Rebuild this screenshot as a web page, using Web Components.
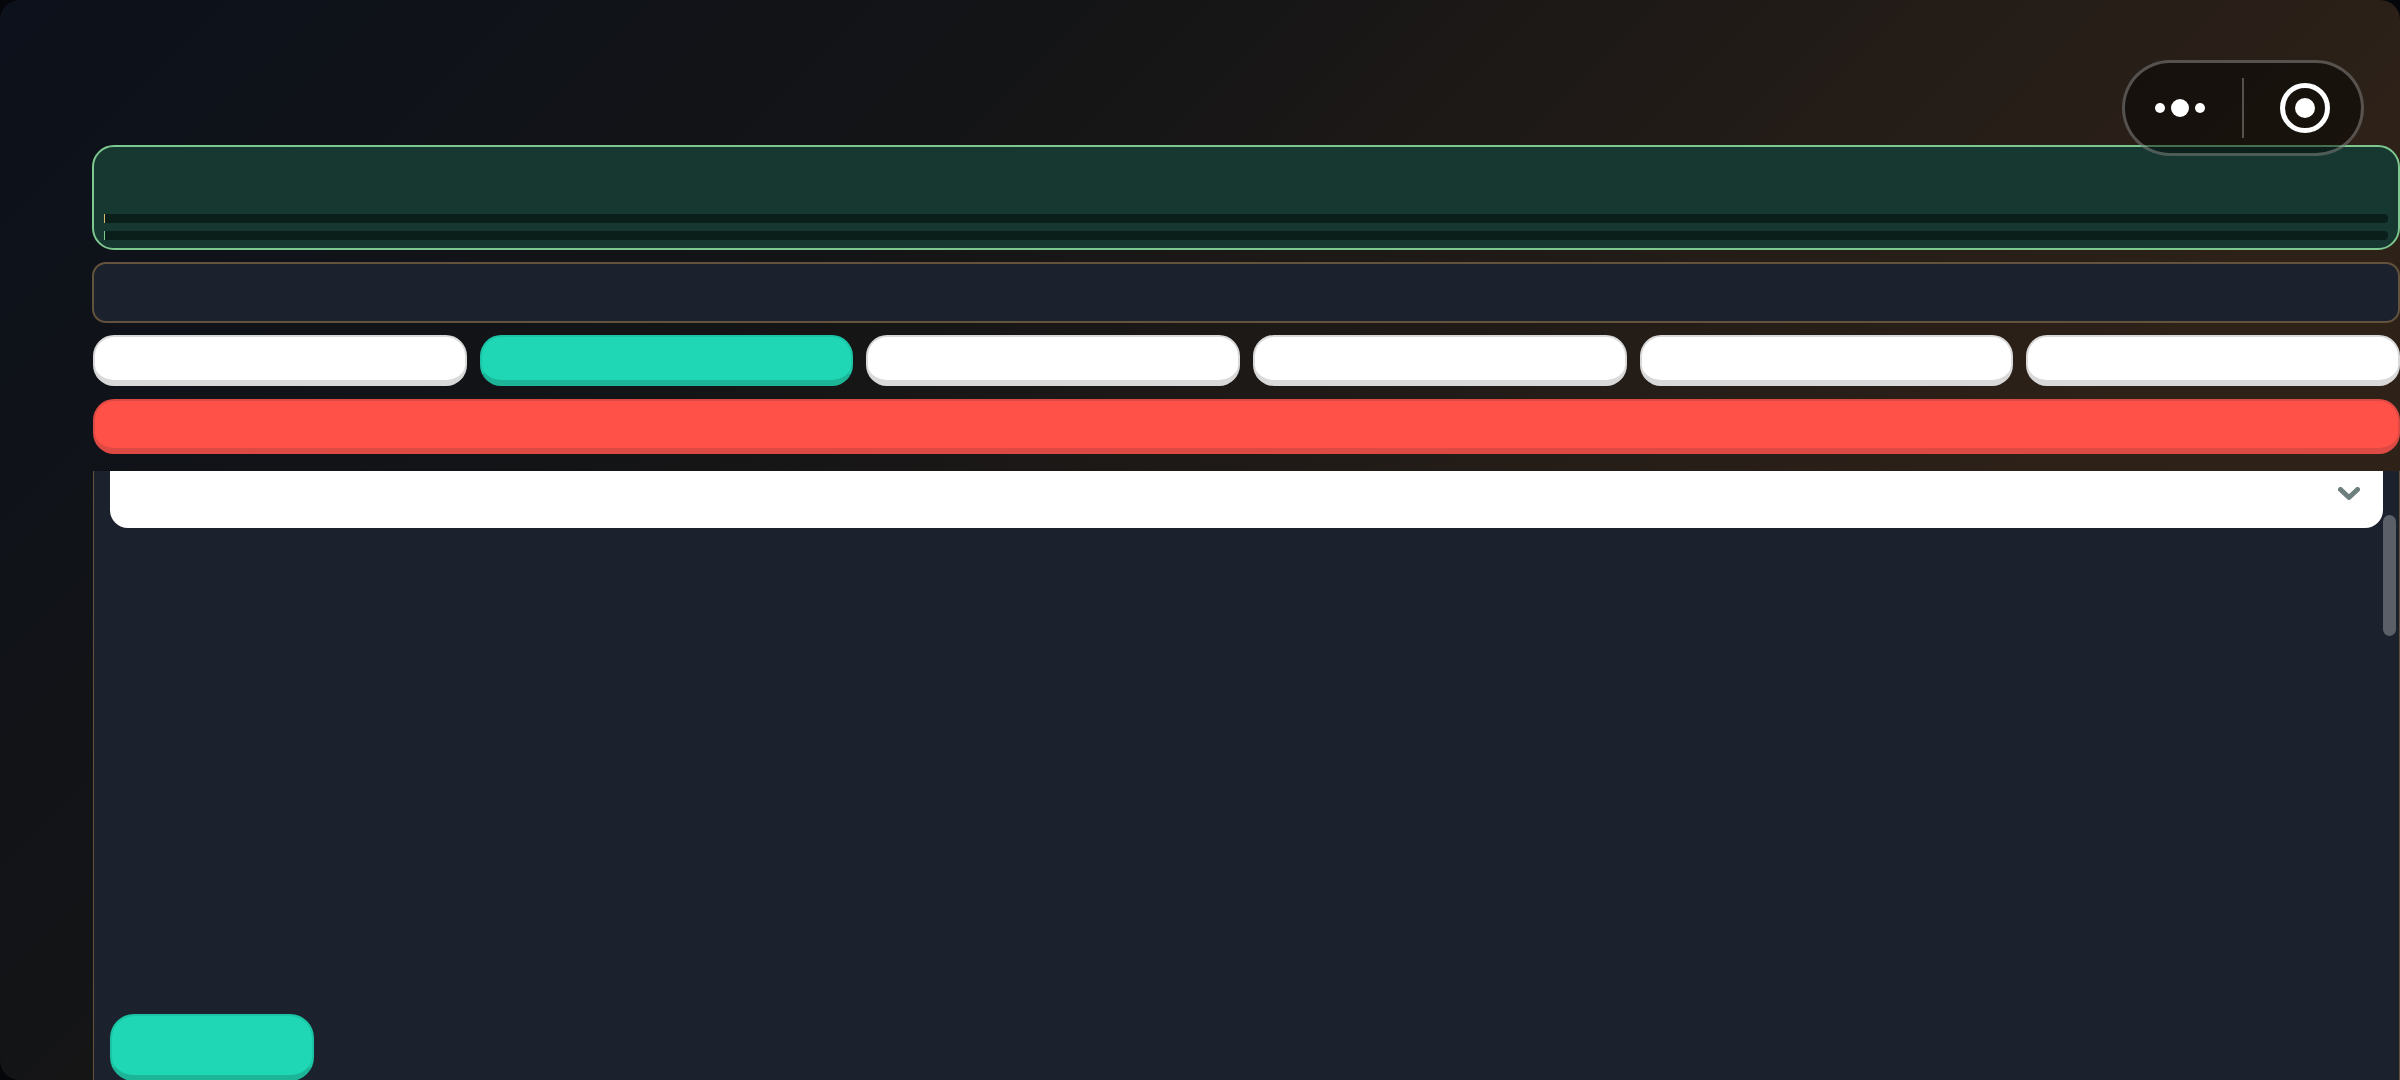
<!DOCTYPE html>
<html><head><meta charset="utf-8"><style>
html,body{margin:0;height:100%;overflow:hidden;background:#05060a}
</style></head><body>
<app-shell>
<green-card></green-card>
<info-card></info-card>
<tab-row><tab-pill></tab-pill><tab-pill active></tab-pill><tab-pill></tab-pill><tab-pill></tab-pill><tab-pill></tab-pill><tab-pill></tab-pill></tab-row>
<danger-button></danger-button>
<scroll-panel><select-box slot="top"></select-box><action-button slot="bottom"></action-button></scroll-panel>
<capsule-menu></capsule-menu>
</app-shell>
<script>
function def(name,html){customElements.define(name,class extends HTMLElement{constructor(){super();this.attachShadow({mode:'open'}).innerHTML=html}})}
def('app-shell',`<style>:host{display:flex;flex-direction:column;box-sizing:border-box;position:relative;width:2400px;height:1080px;padding:145px 0 0 92px;border-radius:20px;background:linear-gradient(135deg,#0c111b 0%,#131416 30%,#2d2118 72%,#2e2219 100%)}</style><slot></slot>`);
def('green-card',`<style>:host{display:flex;flex-direction:column;justify-content:flex-end;gap:8px;box-sizing:border-box;height:105px;border:2px solid #7cc88f;border-radius:22px;background:#163830;padding:0 10px 8px;margin-bottom:12px}
.b{height:9px;background:#0a1e1a;border-radius:0 4px 4px 0}.a{border-left:1.5px solid #d8b86a}.c{border-left:1.5px solid #7cc88f}</style><div class="b a"></div><div class="b c"></div>`);
def('info-card',`<style>:host{display:block;box-sizing:border-box;height:61px;border:2px solid #63523c;border-radius:14px;background:#1b222e;margin-bottom:12px}</style>`);
def('tab-row',`<style>:host{display:grid;grid-template-columns:repeat(6,1fr);column-gap:13px;margin-bottom:13px;padding-left:1px}</style><slot></slot>`);
def('tab-pill',`<style>:host{display:block;box-sizing:border-box;height:51px;background:#fff;border:2px solid #d9d9d9;border-bottom-width:6px;border-radius:21px}:host([active]){background:#1fd6b5;border-color:#1cc4a6 #1cc4a6 #1cb598}</style>`);
def('danger-button',`<style>:host{display:block;box-sizing:border-box;height:55px;margin-left:1px;background:#ff5148;border:2px solid #dc4a43;border-bottom-width:6px;border-radius:21px;margin-bottom:17px}</style>`);
def('scroll-panel',`<style>:host{display:flex;flex-direction:column;justify-content:space-between;position:relative;flex:1;min-height:0;margin-left:1px;box-sizing:border-box;background:#1b222e;border-left:1px solid #63523c;border-right:1px solid #63523c;padding:0 16px}
.thumb{position:absolute;right:3px;top:44px;width:13px;height:121px;border-radius:7px;background:#5a5f68}
.bw{margin-bottom:-1px}</style><slot name="top"></slot><div class="bw"><slot name="bottom"></slot></div><div class="thumb"></div>`);
def('select-box',`<style>:host{display:flex;align-items:center;justify-content:flex-end;box-sizing:border-box;height:57px;background:#fff;border-radius:0 0 18px 18px;padding:0 23px 11px 0}svg{display:block}</style><svg width="22" height="14" viewBox="0 0 22 14"><path d="M2.5 2.5 11 10.5 19.5 2.5" fill="none" stroke="#6c7f7c" stroke-width="5" stroke-linecap="round" stroke-linejoin="round"/></svg>`);
def('action-button',`<style>:host{display:block;box-sizing:border-box;width:204px;height:67px;background:#1fd6b5;border:2px solid #1cc4a6;border-bottom:6px solid #1cb598;border-radius:24px}</style>`);
def('capsule-menu',`<style>:host{position:absolute;left:2122px;top:60px;width:242px;height:96px;box-sizing:border-box;display:flex;align-items:center;border:3px solid rgba(255,255,255,.27);border-radius:48px;background:rgba(0,0,0,.44)}
.l,.r{flex:1;display:flex;align-items:center;justify-content:center}.d{width:2px;height:60px;background:rgba(255,255,255,.27)}svg{display:block}.l svg{margin-right:7px}.r svg{margin-left:4px}</style>
<div class="l"><svg width="52" height="20" viewBox="0 0 52 20"><circle cx="6" cy="10" r="5" fill="#fff"/><circle cx="26" cy="10" r="9" fill="#fff"/><circle cx="46" cy="10" r="5" fill="#fff"/></svg></div><div class="d"></div><div class="r"><svg width="50" height="50" viewBox="0 0 50 50"><circle cx="25" cy="25" r="22.5" fill="none" stroke="#fff" stroke-width="5"/><circle cx="25" cy="25" r="10" fill="#fff"/></svg></div>`);
</script></body></html>
